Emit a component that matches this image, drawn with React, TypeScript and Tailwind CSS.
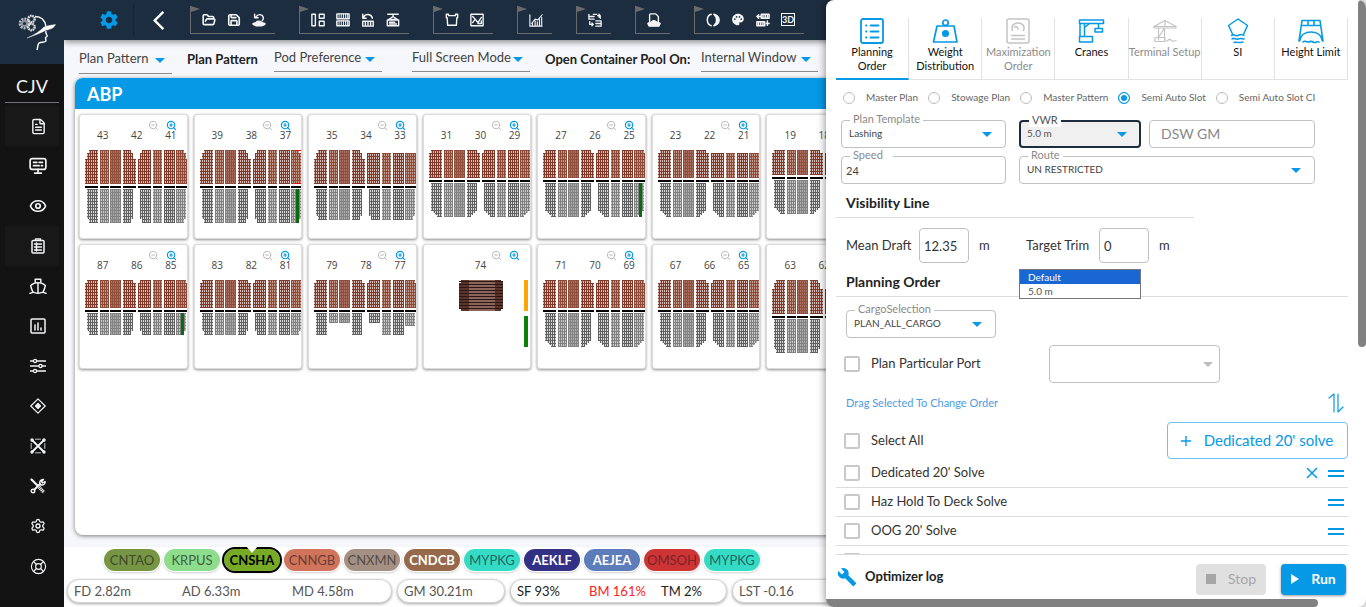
import React from "react";
import { Eye, FileText, LifeBuoy, Settings, ZoomIn, ZoomOut, FolderOpen, Save, X, Plus } from "lucide-react";
import { MdSettings, MdBuild, MdPalette, MdArrowBackIos } from "react-icons/md";

type IconProps = { children: React.ReactNode; className?: string; box?: string; width?: number };

function Icon({ children, className = "size-4", box = "0 0 16 16", width = 1.4 }: IconProps) {
  return (
    <svg
      viewBox={box}
      className={className}
      fill="none"
      stroke="currentColor"
      strokeWidth={width}
      strokeLinecap="round"
      strokeLinejoin="round"
      aria-hidden="true"
    >
      {children}
    </svg>
  );
}

function Caret({ className = "" }: { className?: string }) {
  return (
    <svg viewBox="0 0 10 5" className={`pointer-events-none h-[5px] w-[10px] ${className}`} aria-hidden="true">
      <path d="M0 0h10L5 5z" fill="currentColor" />
    </svg>
  );
}

function Logo() {
  return (
    <svg viewBox="0 0 40 40" className="size-10" fill="none" stroke="#fff" aria-hidden="true">
      <circle cx="6.500" cy="11.500" r="4.600" stroke="#b9bec2" strokeWidth="2.600" strokeDasharray="2 1" />
      <circle cx="6.500" cy="11.500" r="2.600" stroke="#8d9499" strokeWidth="2" />
      <circle cx="13.500" cy="7" r="3.200" stroke="#e0e0e0" strokeWidth="2.400" strokeDasharray="1.600 0.600" />
      <circle cx="13.500" cy="15" r="3.200" stroke="#e0e0e0" strokeWidth="2.400" strokeDasharray="1.600 0.600" />
      <path d="M17 4.500c6 0 10 4 11 10M28 19c-1 3 2 4 1 5.500l-1.500 1 .5 3.500c-1 2-5 .5-7 2-1.500 1.500-1 4-2 7" strokeWidth="1.400" />
      <path d="M9 26c7-3 12-6 17-11 3-1 7-2 11.500-2.500-1 3-5 5-9 5.500-6 3-12 5.500-19.500 8z" fill="#fff" strokeWidth="0.400" />
    </svg>
  );
}

const navItems: { label: string; lit?: boolean; icon: React.ReactNode }[] = [
  { label: "Documents", lit: true, icon: <FileText className="size-[17px]" /> },
  {
    label: "Monitor",
    icon: (
      <Icon className="size-[18px]" width={1.500}>
        <rect x="1" y="1.500" width="14" height="9.500" rx="2" />
        <path d="M4 4.700h3M9 4.700h3M4 7.700h5M11 7.700h1M8 11v3M5 14.300h6" />
      </Icon>
    ),
  },
  { label: "View", icon: <Eye className="size-[18px]" strokeWidth={2.300} /> },
  {
    label: "Plans",
    lit: true,
    icon: (
      <Icon width={1.500}>
        <rect x="2" y="2.500" width="12" height="12.500" rx="1" />
        <path d="M5.500 2.500V1h5v1.500M4.500 6h7M4.500 9h7M4.500 12h7M6.500 5v8" />
      </Icon>
    ),
  },
  {
    label: "Vessel",
    icon: (
      <Icon className="size-[18px]" width={1.300}>
        <path d="M5.500 5V2h5v3M8 5v9M8 5c2 0 4.500.5 6.500 2.500-.3 2.500-1 4-2 6M8 5c-2 0-4.500.5-6.500 2.500.3 2.500 1 4 2 6M.8 14.500c1.500 0 2-1 3-1s2 1 4.200 1 3.200-1 4.200-1 1.500 1 3 1" />
      </Icon>
    ),
  },
  {
    label: "Charts",
    icon: (
      <Icon width={1.500}>
        <rect x="1" y="1" width="14" height="14" rx="1" />
        <path d="M5 7v5M8 5v7M11 10v2" />
      </Icon>
    ),
  },
  {
    label: "Filters",
    icon: (
      <Icon width={1.300}>
        <path d="M0.500 3h3M6.500 3h9M0.500 8h8M12 8h3.500M0.500 13h3M6.500 13h9" />
        <circle cx="5" cy="3" r="1.600" />
        <circle cx="10.500" cy="8" r="1.600" />
        <circle cx="5" cy="13" r="1.600" />
      </Icon>
    ),
  },
  {
    label: "Target",
    icon: (
      <Icon width={1.200}>
        <path d="M8 .8L15.200 8 8 15.200.8 8z" />
        <path d="M8 5.500l2.500 2.500L8 10.500 5.500 8z" fill="currentColor" />
      </Icon>
    ),
  },
  {
    label: "Network",
    icon: (
      <Icon width={1.400}>
        <path d="M2 2l12 12M14 2L2 14" strokeWidth="1.800" />
        <path d="M5.500 1.200h5M5.500 14.800h5M1.200 5.500v5M14.800 5.500v5" strokeWidth="0.800" />
        <circle cx="2" cy="2" r="1" />
        <circle cx="14" cy="2" r="1" />
        <circle cx="2" cy="14" r="1" />
        <circle cx="14" cy="14" r="1" />
      </Icon>
    ),
  },
  {
    label: "Tools",
    icon: (
      <Icon width={1.400}>
        <path d="M1.500 1.500l6 6" strokeWidth="2.200" />
        <path d="M4.500 11.500L10 6" strokeWidth="2" />
        <path d="M10 6.500c-1-3 1-5.500 3.500-5l-2 2 1 1.500 2.500-1.500c.6 2.500-2 4.500-5 3" />
        <circle cx="3" cy="13" r="1.800" />
        <path d="M9 9l5 5.500" strokeWidth="3.400" strokeDasharray="1.200 .6" strokeLinecap="butt" />
      </Icon>
    ),
  },
  { label: "Settings", icon: <Settings className="size-4" /> },
  { label: "Help", icon: <LifeBuoy className="size-[17px]" strokeWidth={1.600} /> },
];

function Sidebar() {
  return (
    <nav aria-label="Main" className="z-10 flex w-16 shrink-0 flex-col items-center bg-[#131313] text-gray-100">
      <div className="flex h-16 w-full items-center justify-end bg-[#1c2d3f] pr-[6px]">
        <Logo />
      </div>
      <div className="flex h-[39px] w-[54px] items-center justify-center border-b border-[#6d757c] pt-[6px] text-lg">
        CJV
      </div>
      <ul className="mt-[3px] w-[54px]">
        {navItems.map((n) => (
          <li key={n.label}>
            <button
              aria-label={n.label}
              className={`flex h-10 w-full items-center justify-center pl-3 ${n.lit ? "bg-[#181818]" : ""}`}
            >
              {n.icon}
            </button>
          </li>
        ))}
      </ul>
    </nav>
  );
}

const boxRow = (y: number) => (
  <g key={y}>
    <rect x="1" y={y} width="14" height="5.500" fill="none" />
    <path d={`M3.500 ${y}v5M6 ${y}v5M8.500 ${y}v5M11 ${y}v5M13 ${y}v5`} strokeWidth="1.100" />
  </g>
);

const toolGroups: React.ReactNode[][] = [
  [
    <FolderOpen key="open" className="size-[14px]" strokeWidth={2.800} />,
    <Save key="save" className="size-[14px]" strokeWidth={2.800} />,
    <Icon key="undo" className="size-[14px]" width={1.600}>
      <path d="M4.500 4.500C7 .5 12.500 1 13 6c0 1.500-.5 2-1.500 3M3 1.500v4h4" />
      <path d="M1 12.500c1-1 3-.5 4-2s4-1.500 6 0 3 1 4 2c-2 3-12 3-14 0z" fill="currentColor" />
    </Icon>,
  ],
  [
    <Icon key="layout" className="size-[14px]" width={1.600}>
      <path d="M1 1.500h4v13H1zM9.500 1.500h5.500V6H9.500zM9.500 9.500h5.500v5H9.500z" />
    </Icon>,
    <Icon key="rows" className="size-[14px]" width={1.700}>
      {boxRow(1)}
      {boxRow(9)}
    </Icon>,
    <Icon key="restow" className="size-[14px]" width={1.600}>
      <path d="M3 5c2-5 9-4 10 1M2 1.500V6h4M2 9.500h12V15H2zM5 10v5M8 10v5M11 10v5" />
    </Icon>,
    <Icon key="lift" className="size-[14px]" width={1.600}>
      <path d="M2 1.500h12M8 2v2L3 7.500h10L8 4M1.500 8h13v6.500h-13zM4 10.500h6M4 12.500h8" />
    </Icon>,
  ],
  [
    <Icon key="hull" className="size-[14px]" width={1.600}>
      <path d="M1.500 1.500h2.500v1.500h8v-1.500h2.500v4h-1L13 14H3L2.500 5.500h-1z" />
    </Icon>,
    <Icon key="trend" className="size-[14px]" width={1.600}>
      <rect x="1" y="1.500" width="14" height="13" />
      <path d="M3 11l3-4 3 4 4-6M3 4l2 2M9 12h4V9" />
    </Icon>,
  ],
  [
    <Icon key="stats" className="size-[14px]" width={1.300}>
      <path d="M1 2v13h14M3 12l4-5 3 1 5-6M4 12v2M7 9v5M9.500 10v4M12 7v7M14.500 5v9" />
    </Icon>,
  ],
  [
    <Icon key="swap" className="size-[14px]" width={1.500}>
      <path d="M1 1.500v5.500h6M1 4h6M6 1.500h4M11 3h3v3M12.500 1.500L14 3l-1.500 1.500M2 10v3h4M4.500 11.500L6 13l-1.500 1.500M9 9h6M9 12h6M9 15h6V9" />
    </Icon>,
  ],
  [
    <Icon key="doc" className="size-[14px]" width={1.600}>
      <path d="M3 10V2c0-.6.400-1 1-1h6l3 3v6" />
      <path d="M1 12c1.500-1.500 3 0 4.500-2s4-1 5 0 3 .5 4.500 2l-1.500 3h-11z" fill="currentColor" />
    </Icon>,
  ],
  [
    <Icon key="contrast" className="size-[14px]" width={1.700}>
      <path d="M6 1.500C0 3 0 13 6 14.500" />
      <path d="M9 1.500c8 1.500 8 11.500 0 13 4-4 4-9 0-13z" fill="currentColor" strokeDasharray="2 1" />
    </Icon>,
    <MdPalette key="palette" className="size-[15px]" />,
    <Icon key="move" className="size-[14px]" width={1.700}>
      <path d="M6 1.500h9v4.500H6zM8 2v4M10.500 2v4M13 2v4M1 10h9v4.500H1zM3 10v4M5.500 10v4M8 10v4M1 4h4M3 2L1 4l2 2M12 12h3M13 14V9" />
    </Icon>,
    <span key="3d" className="flex h-[13px] w-[14px] items-center justify-center border border-current text-[9px] leading-none font-bold">
      3D
    </span>,
  ],
];

const toolNames = [
  ["Open", "Save", "Restore"],
  ["Layout", "Rows", "Restow", "Lift"],
  ["Hull", "Trend"],
  ["Statistics"],
  ["Swap"],
  ["Report"],
  ["Contrast", "Palette", "Move", "3D view"],
];

function TopBar() {
  return (
    <header className="relative flex h-10 shrink-0 items-center bg-[#1c2d3f] text-gray-100 shadow-[0_2px_6px_rgba(0,0,0,0.45)]">
      <button aria-label="Preferences" className="ml-[34px] flex size-[22px] items-center justify-center text-[#0599e6]">
        <MdSettings className="size-[22px]" />
      </button>
      <span className="ml-[13px] h-8 w-px bg-[#17242f]" />
      <button aria-label="Back" className="ml-[18px] flex w-5 justify-center pl-1 text-white">
        <MdArrowBackIos className="size-[23px] shrink-0" />
      </button>
      <div className="ml-[18px] flex gap-6">
        {toolGroups.map((g, i) => (
          <div
            key={toolNames[i][0]}
            className="relative flex h-7 shrink-0 items-center gap-[11px] border-b border-l border-[#6a6a6a] pr-[9px] pl-[11px]"
          >
            <svg viewBox="0 0 9 6" className="absolute top-0 left-0 h-[6px] w-[9px]" aria-hidden="true">
              <path d="M0 0l9 3-9 3z" fill="#6a6a6a" />
            </svg>
            {g.map((icon, j) => (
              <button key={toolNames[i][j]} aria-label={toolNames[i][j]} className="flex w-[14px] justify-center">
                {icon}
              </button>
            ))}
          </div>
        ))}
      </div>
    </header>
  );
}

function LineSelect({ label, value, className }: { label: string; value: string; className: string }) {
  return (
    <div className={`relative flex shrink-0 items-center border-b border-[#8a8a8a] ${className}`}>
      <select aria-label={label} className="h-6 w-full appearance-none bg-transparent text-[13px] text-[#444] outline-none">
        <option>{value}</option>
      </select>
      <Caret className="absolute right-[7px] mt-1 text-[#0599e6]" />
    </div>
  );
}

type Bay = {
  nums: string[];
  deck: number;
  hold: number;
  taper?: number;
  shortRight?: boolean;
  green?: boolean;
  red?: boolean;
  notch?: boolean;
  flatTop?: boolean;
};

const bays: Bay[] = [
  { nums: ["43", "42", "41"], deck: 34, hold: 34, taper: 1 },
  { nums: ["39", "38", "37"], deck: 34, hold: 34, taper: 1, green: true, red: true },
  { nums: ["35", "34", "33"], deck: 34, hold: 31, taper: 1, shortRight: true },
  { nums: ["31", "30", "29"], deck: 28, hold: 34, taper: 3, flatTop: true },
  { nums: ["27", "26", "25"], deck: 28, hold: 34, taper: 3, green: true, flatTop: true },
  { nums: ["23", "22", "21"], deck: 28, hold: 34, taper: 3, shortRight: true, flatTop: true },
  { nums: ["19", "18", "17"], deck: 25, hold: 34, taper: 3, flatTop: true },
  { nums: ["87", "86", "85"], deck: 28, hold: 22, taper: 1, green: true, flatTop: true },
  { nums: ["83", "82", "81"], deck: 28, hold: 22, taper: 1, flatTop: true },
  { nums: ["79", "78", "77"], deck: 28, hold: 22, notch: true, flatTop: true },
  { nums: ["74"], deck: 31, hold: 0 },
  { nums: ["71", "70", "69"], deck: 28, hold: 34, taper: 3, flatTop: true },
  { nums: ["67", "66", "65"], deck: 28, hold: 34, taper: 3, flatTop: true },
  { nums: ["63", "62", "61"], deck: 34, hold: 34, taper: 1 },
];

const blocks = [
  { x: 5, cols: 6, tone: 0, edge: -1 },
  { x: 20, cols: 4, tone: 1, edge: 0 },
  { x: 30, cols: 5, tone: 2, edge: 0 },
  { x: 43, cols: 6, tone: 0, edge: 1 },
  { x: 58, cols: 6, tone: 0, edge: -1 },
  { x: 73, cols: 4, tone: 1, edge: 0 },
  { x: 84, cols: 5, tone: 0, edge: 0 },
  { x: 96, cols: 6, tone: 1, edge: 1 },
];

const deckFill = ["url(#deckDark)", "url(#deckMid)", "url(#deckSoft)"];
const holdFill = ["url(#holdDark)", "url(#holdMid)", "url(#holdSoft)"];
const notchDepth = [0, 12, 12, 0, 12, 0, 0, 9];

function Patterns() {
  const tones: [string, string, string][] = [
    ["deckDark", "#7d3a2b", "#f0dfda"],
    ["deckMid", "#8e4a38", "#d4b0a5"],
    ["deckSoft", "#8f4d3c", "#b37d6e"],
    ["holdDark", "#606060", "#f8f8f8"],
    ["holdMid", "#808080", "#dcdcdc"],
    ["holdSoft", "#828282", "#b8b8b8"],
  ];
  return (
    <svg className="absolute size-0" aria-hidden="true">
      <defs>
        {tones.map(([id, line, gap]) => (
          <pattern key={id} id={id} width="2" height="3" patternUnits="userSpaceOnUse">
            <rect width="2" height="3" fill={line} />
            <rect x="1" y="1" width="1" height="2" fill={gap} opacity="0.800" />
          </pattern>
        ))}
      </defs>
    </svg>
  );
}

function BayDrawing({ bay }: { bay: Bay }) {
  if (bay.nums.length === 1) {
    return (
      <svg viewBox="0 0 109 80" preserveAspectRatio="xMinYMin slice" className="h-20 w-full" shapeRendering="crispEdges" aria-hidden="true">
        <path d="M37 0h40v2h2v26h-2v3H37v-3h-2V3h2z" fill="#8a655b" />
        <path d="M37 0h8v31h-8v-3h-2V3h2zM71 0h6v2h2v26h-2v3h-6z" fill="#5b342b" />
        {[1, 4, 7, 10, 13, 16, 19, 22, 25, 28].map((y) => (
          <path key={y} d={`M35 ${y}h44`} stroke="#2a1713" strokeWidth="1" />
        ))}
        <rect x="100" y="0" width="4" height="31" fill="#ffa500" />
        <rect x="100" y="36" width="4" height="31" fill="#088208" />
      </svg>
    );
  }
  const line = bay.deck + 3;
  const holdTop = line + 2;
  return (
    <svg viewBox="0 0 109 80" preserveAspectRatio="xMinYMin slice" className="h-20 w-full" shapeRendering="crispEdges" aria-hidden="true">
      {blocks.map((b, i) => {
        const w = b.cols * 2 + 1;
        const cells = [];
        for (let c = 0; c < b.cols; c++) {
          const fromEdge = b.edge < 0 ? c : b.edge > 0 ? b.cols - 1 - c : 9;
          let top = bay.flatTop ? (fromEdge === 0 ? 3 : 0) : fromEdge === 0 ? 9 : fromEdge === 1 ? 3 : 0;
          if (bay.shortRight && i > 3) top = 3;
          const last = c === b.cols - 1;
          cells.push(
            <rect key={`d${c}`} x={b.x + c * 2} y={top} width={last ? 3 : 2} height={bay.deck - top} fill={deckFill[b.tone]} />,
          );
          if (fromEdge === 0) continue;
          let depth = bay.hold;
          if (bay.taper === 1 && fromEdge === 1) depth -= 4;
          if (bay.taper === 3 && fromEdge < 4) depth -= (4 - fromEdge) * 2;
          if (bay.notch) depth -= notchDepth[i];
          cells.push(
            <rect key={`h${c}`} x={b.x + c * 2} y={holdTop} width={last ? 3 : 2} height={depth} fill={holdFill[b.tone]} />,
          );
        }
        return (
          <g key={b.x}>
            {cells}
            <rect x={b.x} y={line - 1} width={w} height="2" fill="#000" />
          </g>
        );
      })}
      {bay.green && <rect x="101" y={holdTop} width="3" height={bay.hold} fill="#0b6b0f" />}
      {bay.red && <path d="M101 .5h5M101 33.500h5" stroke="#f00" />}
    </svg>
  );
}

function BayCard({ bay }: { bay: Bay }) {
  return (
    <article className="flex h-[125px] flex-col overflow-hidden rounded-[3px] border border-[#dcdcdc] bg-white shadow-[0_1px_3px_rgba(0,0,0,0.45)]">
      <div className="flex justify-end gap-[7px] pt-[5px] pr-[10px]">
        <button aria-label="Zoom out">
          <ZoomOut className="size-[11px] text-[#b5b5b5]" />
        </button>
        <button aria-label="Zoom in">
          <ZoomIn className="size-[11px] text-[#0599e6]" strokeWidth={2.500} />
        </button>
      </div>
      <div
        className={`flex h-[19px] items-start pr-[10px] pl-[17px] font-['Open_Sans',sans-serif] text-[10px] leading-[9px] text-[#444] ${
          bay.nums.length === 1 ? "justify-center" : "justify-between"
        }`}
      >
        {bay.nums.map((n) => (
          <span key={n}>{n}</span>
        ))}
      </div>
      <BayDrawing bay={bay} />
    </article>
  );
}

const ports: { code: string; tone: string; active?: boolean }[] = [
  { code: "CNTAO", tone: "bg-[#769644] text-[#3f4a2e]" },
  { code: "KRPUS", tone: "bg-[#8edd8c] text-[#3c6144]" },
  { code: "CNSHA", tone: "bg-[#78ab25] text-black font-bold", active: true },
  { code: "CNNGB", tone: "bg-[#d0745c] text-[#6d3c34]" },
  { code: "CNXMN", tone: "bg-[#a59084] text-[#564c48]" },
  { code: "CNDCB", tone: "bg-[#97694b] text-white font-bold" },
  { code: "MYPKG", tone: "bg-[#34dcc6] text-[#24665f]" },
  { code: "AEKLF", tone: "bg-[#333186] text-white font-bold" },
  { code: "AEJEA", tone: "bg-[#5c7cba] text-white font-bold" },
  { code: "OMSOH", tone: "bg-[#cf3434] text-[#742529]" },
  { code: "MYPKG", tone: "bg-[#34dcc6] text-[#24665f]" },
];

const pill = "flex h-6 shrink-0 items-center rounded-full border border-[#d4d4d4] bg-white px-[6px] pt-px text-[13px] text-[#555] shadow-[0_1px_3px_rgba(0,0,0,0.35)]";

function Workspace() {
  return (
    <main className="-mr-2 flex min-w-0 flex-1 flex-col overflow-hidden bg-[#f5f7fa]">
      <TopBar />
      <div className="flex h-[38px] shrink-0 items-start pt-1 pl-[15px] text-[13px] font-bold whitespace-nowrap text-[#222]">
        <LineSelect label="Plan pattern" value="Plan Pattern" className="h-[30px] w-[93px] font-normal" />
        <span className="ml-[15px] w-[72px] leading-[30px]">Plan Pattern</span>
        <LineSelect label="Pod preference" value="Pod Preference" className="ml-[15px] h-7 w-[108px] font-normal" />
        <LineSelect label="Screen mode" value="Full Screen Mode" className="ml-[30px] h-7 w-[118px] font-normal" />
        <span className="ml-[15px] w-[142px] leading-[30px]">Open Container Pool On:</span>
        <LineSelect label="Open container pool on" value="Internal Window" className="ml-[14px] h-7 w-[117px] font-normal" />
      </div>
      <section className="ml-[11px] flex min-h-0 flex-1 flex-col overflow-hidden rounded-l-lg bg-white shadow-[0_1px_4px_rgba(0,0,0,0.5)]">
        <h1 className="flex h-[31px] shrink-0 items-center bg-[#0599e6] pl-3 text-lg font-bold text-white">ABP</h1>
        <div className="mt-[5px] grid w-[800px] grid-cols-7 gap-x-[6px] gap-y-[5px] pl-1">
          {bays.map((b) => (
            <BayCard key={b.nums[0]} bay={b} />
          ))}
        </div>
      </section>
      <footer className="mt-3 shrink-0 bg-white">
        <div className="flex h-[26px] items-center gap-1 pl-10">
          {ports.map((p, i) => (
            <button
              key={i}
              className={`relative flex h-[22px] w-14 shrink-0 items-center justify-center rounded-full pt-px text-[13px] shadow-[0_0_0_1px_#fff,0_1px_3px_rgba(0,0,0,0.4)] ${p.tone} ${
                p.active ? "outline-2 outline-black" : ""
              }`}
            >
              {p.code}
              {p.active && (
                <svg viewBox="0 0 12 7" className="absolute -top-[2px] h-[6px] w-3" aria-hidden="true">
                  <path d="M0 0h12L6 7z" fill="#fff" />
                </svg>
              )}
            </button>
          ))}
        </div>
        <div className="flex gap-[5px] pt-[6px] pb-1 pl-[3px] whitespace-nowrap">
          <div className={`${pill} w-[325px]`}>
            <span className="w-[108px]">FD 2.82m</span>
            <span className="w-[110px]">AD 6.33m</span>
            <span>MD 4.58m</span>
          </div>
          <div className={`${pill} w-[108px]`}>GM 30.21m</div>
          <div className={`${pill} w-[217px]`}>
            <span className="w-[72px] text-[#222]">SF 93%</span>
            <span className="w-[72px] text-[#f22]">BM 161%</span>
            <span className="text-[#222]">TM 2%</span>
          </div>
          <div className={`${pill} w-[120px]`}>LST -0.16</div>
        </div>
      </footer>
    </main>
  );
}

const tabIcon = "h-[27px] w-7";

const tabs: { label: string; off?: boolean; active?: boolean; icon: React.ReactNode }[] = [
  {
    label: "Planning Order",
    active: true,
    icon: (
      <Icon className={tabIcon} box="0 0 28 27" width={1.800}>
        <rect x="3" y="1" width="22" height="24" rx="2" />
        <path d="M12.500 7.500h8M12.500 13.500h8M12.500 19.500h8M8 7.500h.5M8 13.500h.5M8 19.500h.5" />
      </Icon>
    ),
  },
  {
    label: "Weight Distribution",
    icon: (
      <Icon className={tabIcon} box="0 0 28 27" width={1.700}>
        <path d="M6 8h17l3 16H2.500z" />
        <circle cx="14.500" cy="4.700" r="2.700" />
        <circle cx="14.500" cy="15.500" r="2.700" fill="currentColor" />
      </Icon>
    ),
  },
  {
    label: "Maximization Order",
    off: true,
    icon: (
      <Icon className={tabIcon} box="0 0 28 27" width={1.500}>
        <rect x="3" y="1" width="22" height="24" rx="2" />
        <path d="M8.500 12.500c-4-10 15-10 11 0M10.500 9c2-1 3 0 3.500 2M7.500 17.500h13M7.500 21h13" />
      </Icon>
    ),
  },
  {
    label: "Cranes",
    icon: (
      <Icon className={tabIcon} box="0 0 28 27" width={1.500}>
        <path d="M2.500 2h24v3.500h-24zM3 5.500h4.500v13H3zM7.500 9.500l5-4M21.500 5.500v5M18 10.500h7.500v3.500H18zM2.500 18.500h13v5.500h-13z" />
      </Icon>
    ),
  },
  {
    label: "Terminal Setup",
    off: true,
    icon: (
      <Icon className={tabIcon} box="0 0 28 27" width={1.200}>
        <path d="M14 2.500v6M3 8.500h22v1.500H3zM3 8.500l11-6 11 6M7.500 10v12M13.500 10v12M4 19.500h10v4H4zM7.500 19.500l6-9.500M16 23c2-2 3-2 4.500-.5s2.500 1 4.500 0" />
      </Icon>
    ),
  },
  {
    label: "SI",
    icon: (
      <Icon className={tabIcon} box="0 0 28 27" width={1.500}>
        <path d="M8.500 16L4.500 7.500 14 1l9.500 6.500-4 9M7.500 17.500c2-2 4 1 6.500 0s3-2 6 0M8 21c2-2 4 1 6 0s3-1 6 0M10 24.500c2-1 4 1 9-.5" />
      </Icon>
    ),
  },
  {
    label: "Height Limit",
    icon: (
      <Icon className={tabIcon} box="0 0 28 27" width={1.600}>
        <path d="M5 2.500h18l3 20.500M5 2.500L2 23M4.500 7.500h19M11 2.500v5M17 2.500v5M2.500 23c1-6 6-9 11.500-9s10.500 3 11.500 9M6 24c2-2 3 0 5 0s3-1.500 5 0 3-1 6 0" />
      </Icon>
    ),
  },
];

const fieldBox = "relative rounded border border-[#c0c0c0] bg-white";
const legend = "absolute -top-[9px] left-[8px] bg-white px-[3px] text-[11px] leading-[14px] text-[#8a8a8a]";

function SelectField({ id, label, value, className = "" }: { id: string; label: string; value: string; className?: string }) {
  return (
    <div className={`flex h-7 items-center ${fieldBox} ${className}`}>
      <label htmlFor={id} className={legend}>
        {label}
      </label>
      <select id={id} className="h-full w-full appearance-none rounded bg-transparent pb-px pl-[7px] text-[10px] text-[#444] outline-none">
        <option>{value}</option>
      </select>
      <Caret className="absolute right-[13px] text-[#0599e6]" />
    </div>
  );
}

const box = "size-4 shrink-0 appearance-none rounded-[2px] border-2 border-[#c8c8c8] bg-white";

function Check({ id, label }: { id: string; label: string }) {
  return (
    <div className="flex items-center gap-[11px] pl-2">
      <input type="checkbox" id={id} className={box} />
      <label htmlFor={id}>{label}</label>
    </div>
  );
}

function DragHandle() {
  return (
    <button aria-label="Drag to reorder" className="flex h-4 w-4 flex-col justify-center gap-[3px]">
      <span className="h-[2px] w-full bg-[#0599e6]" />
      <span className="h-[2px] w-full bg-[#0599e6]" />
    </button>
  );
}

const solves = ["Dedicated 20' Solve", "Haz Hold To Deck Solve", "OOG 20' Solve"];
const modes = ["Master Plan", "Stowage Plan", "Master Pattern", "Semi Auto Slot", "Semi Auto Slot CI"];

function OptimizerPanel() {
  return (
    <aside className="relative z-20 flex w-[540px] shrink-0 flex-col overflow-hidden rounded-lg bg-white text-[13px] text-[#333] shadow-[0_0_8px_rgba(0,0,0,0.5)]">
      <div className="flex min-h-0 flex-1">
        <div className="flex min-w-0 flex-1 flex-col pl-[10px]">
          <div className="mr-[10px] flex min-h-0 flex-1 flex-col overflow-hidden">
            <div role="tablist" className="mt-[18px] grid h-[62px] shrink-0 grid-cols-7 border-b border-[#e2e2e2]">
              {tabs.map((t) => (
                <button
                  key={t.label}
                  role="tab"
                  aria-selected={!!t.active}
                  disabled={t.off}
                  className={`-mb-px flex min-w-0 flex-col items-center border-r border-[#e2e2e2] text-[11px] leading-[14px] ${
                    t.active ? "border-b-2 border-b-[#0599e6]" : ""
                  } ${t.off ? "text-[#8c8c8c]" : "text-[#111]"}`}
                >
                  <span className={t.off ? "text-[#c4c4c4]" : "text-[#0599e6]"}>{t.icon}</span>
                  <span className={t.label === "Terminal Setup" || t.label === "Height Limit" ? "whitespace-nowrap" : ""}>{t.label}</span>
                </button>
              ))}
            </div>
            <div
              role="radiogroup"
              aria-label="Solve mode"
              className="flex h-[35px] shrink-0 items-center gap-[10px] pl-[7px] text-[10px] whitespace-nowrap text-[#666]"
            >
              {modes.map((m, i) => (
                <div key={m} className="flex items-center gap-[11px]">
                  <input
                    type="radio"
                    name="mode"
                    id={`mode-${i}`}
                    defaultChecked={i === 3}
                    className="size-3 appearance-none rounded-full border border-[#bdbdbd] bg-white checked:border-[#0599e6] checked:bg-[#0599e6] checked:shadow-[inset_0_0_0_2px_#fff]"
                  />
                  <label htmlFor={`mode-${i}`}>{m}</label>
                </div>
              ))}
            </div>
            <div className="flex shrink-0 gap-[13px] pt-[5px] pl-[5px]">
              <div className="flex w-[165px] flex-col gap-2">
                <SelectField id="template" label="Plan Template" value="Lashing" />
                <div className={`flex h-7 items-center ${fieldBox}`}>
                  <label htmlFor="speed" className={`${legend} pr-[10px]`}>
                    Speed
                  </label>
                  <input id="speed" defaultValue="24" className="h-full w-full rounded bg-transparent pl-1 text-[11px] text-[#444] outline-none" />
                </div>
              </div>
              <div className="flex w-[296px] flex-col gap-2">
                <div className="flex gap-2">
                  <div className="relative flex h-7 w-[122px] items-center rounded border-2 border-[#1c2d3f] bg-[#f0f0f0]">
                    <label htmlFor="vwr" className={`${legend} text-[#555]`}>
                      VWR
                    </label>
                    <select id="vwr" className="h-full w-full appearance-none bg-transparent pb-px pl-[6px] text-[10px] text-[#555] outline-none">
                      <option>5.0 m</option>
                    </select>
                    <Caret className="absolute right-3 text-[#0599e6]" />
                    <ul
                      role="listbox"
                      aria-label="VWR values"
                      className="absolute top-[147px] -left-[2px] z-30 w-[122px] border border-[#777] bg-white text-[10px] leading-[14px] text-[#555]"
                    >
                      <li role="option" aria-selected="true" className="bg-[#1967d2] pl-2 text-white">
                        Default
                      </li>
                      <li role="option" aria-selected="false" className="pl-2">
                        5.0 m
                      </li>
                    </ul>
                  </div>
                  <input
                    aria-label="DSW GM"
                    placeholder="DSW GM"
                    className="h-7 min-w-0 flex-1 rounded border border-[#c0c0c0] pb-px pl-[11px] text-sm outline-none placeholder:text-[#888]"
                  />
                </div>
                <SelectField id="route" label="Route" value="UN RESTRICTED" />
              </div>
            </div>
            <h2 className="mt-[5px] flex h-[29px] w-[358px] shrink-0 items-center border-b border-[#dcdcdc] pl-[10px] text-sm font-bold text-[#222]">
              Visibility Line
            </h2>
            <div className="mt-[10px] flex h-[35px] shrink-0 items-center pl-[10px]">
              <label htmlFor="draft" className="w-[73px]">
                Mean Draft
              </label>
              <input id="draft" defaultValue="12.35" className="h-full w-[50px] rounded border border-[#c0c0c0] pl-1 outline-none" />
              <span className="ml-[10px] w-[47px]">m</span>
              <label htmlFor="trim" className="w-[73px] whitespace-nowrap">
                Target Trim
              </label>
              <input id="trim" defaultValue="0" className="h-full w-[50px] rounded border border-[#c0c0c0] pl-1 outline-none" />
              <span className="ml-[10px]">m</span>
            </div>
            <h2 className="mt-[5px] flex h-[29px] shrink-0 items-center border-b border-[#dcdcdc] pl-[10px] text-sm font-bold text-[#222]">
              Planning Order
            </h2>
            <SelectField id="cargo" label="CargoSelection" value="PLAN_ALL_CARGO" className="mt-[13px] ml-[10px] w-[150px] shrink-0" />
            <div className="mt-[7px] flex shrink-0 items-center">
              <div className="w-[213px]">
                <Check id="port" label="Plan Particular Port" />
              </div>
              <div className="relative flex h-[38px] w-[171px] items-center">
                <select aria-label="Particular port" className="h-full w-full appearance-none rounded border border-[#c0c0c0] outline-none" />
                <Caret className="absolute right-[7px] text-[#bdbdbd]" />
              </div>
            </div>
            <div className="flex h-[39px] shrink-0 items-center justify-between pr-1 pl-[10px] text-[11px] text-[#4a9de4]">
              <span className="pt-[2px]">Drag Selected To Change Order</span>
              <button aria-label="Reverse order" className="text-[#0599e6]">
                <Icon className="h-5 w-4" box="0 0 16 20" width={1.200}>
                  <path d="M1 5l5-4v18M10 1v18l5-5" />
                </Icon>
              </button>
            </div>
            <div className="flex shrink-0 items-center justify-between">
              <Check id="all" label="Select All" />
              <button className="flex h-[37px] w-[181px] items-center justify-center gap-[10px] rounded border border-[#6cc1f0] pr-1 text-[15px] whitespace-nowrap text-[#0599e6]">
                <Plus className="size-4" />
                Dedicated 20' solve
              </button>
            </div>
            <ul>
              {solves.map((s, i) => (
                <li key={s} className="flex h-[29px] items-center justify-between border-b border-[#dcdcdc] pr-1">
                  <Check id={`solve-${i}`} label={s} />
                  <div className="flex items-center gap-[7px]">
                    {i === 0 && (
                      <button aria-label="Remove" className="text-[#0599e6]">
                        <X className="size-[18px]" />
                      </button>
                    )}
                    <DragHandle />
                  </div>
                </li>
              ))}
              <li className="flex h-[29px] items-center pl-2">
                <input type="checkbox" aria-label="Next solve" className={box} />
              </li>
            </ul>
          </div>
          <div className="mr-[10px] flex h-[45px] shrink-0 items-center border-t border-[#dcdcdc]">
            <MdBuild className="ml-px size-5 text-[#0599e6]" />
            <a href="#log" className="ml-2 flex-1 font-bold text-[#222]">
              Optimizer log
            </a>
            <button disabled className="mt-1 flex h-[31px] w-[70px] items-center justify-center gap-3 rounded bg-[#e0e0e0] text-sm text-[#a6a6a6]">
              <span className="size-[10px] bg-[#a6a6a6]" />
              Stop
            </button>
            <button className="mt-1 mr-[2px] ml-[15px] flex h-[31px] w-[65px] items-center justify-center gap-3 rounded bg-[#0599e6] text-sm font-bold text-white shadow-[0_1px_3px_rgba(0,0,0,0.4)]">
              <svg viewBox="0 0 8 10" className="h-[10px] w-2" aria-hidden="true">
                <path d="M0 0l8 5-8 5z" fill="currentColor" />
              </svg>
              Run
            </button>
          </div>
        </div>
        <div className="w-2 shrink-0">
          <div className="h-[58%] rounded-full bg-[#818181]" />
        </div>
      </div>
      <div className="h-2 shrink-0">
        <div className="h-full w-[492px] rounded-r-full bg-[#818181]" />
      </div>
    </aside>
  );
}

export default function App() {
  return (
    <div className="flex h-screen overflow-hidden bg-white font-[Lato,sans-serif]">
      <Patterns />
      <Sidebar />
      <Workspace />
      <OptimizerPanel />
    </div>
  );
}
